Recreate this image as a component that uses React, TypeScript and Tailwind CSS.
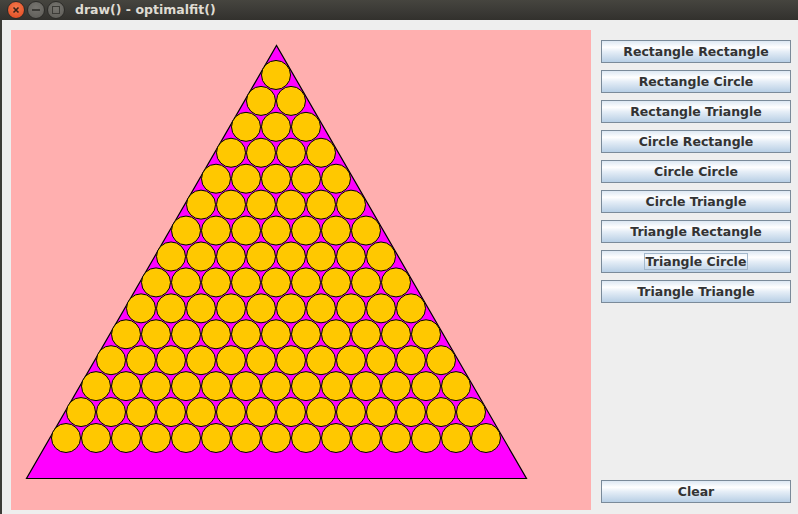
import type { ReactNode } from "react";

const buttons = [
  "Rectangle Rectangle",
  "Rectangle Circle",
  "Rectangle Triangle",
  "Circle Rectangle",
  "Circle Circle",
  "Circle Triangle",
  "Triangle Rectangle",
  "Triangle Circle",
  "Triangle Triangle",
];

function MetalButton({ children, focused = false }: { children: ReactNode; focused?: boolean }) {
  return (
    <button
      className="flex h-[23px] w-[190px] items-center justify-center border border-[#7a8a99] bg-[linear-gradient(to_bottom,#dde8f3_0%,#ffffff_30%,#e6eef7_50%,#b8cfe5_100%)] text-[12.5px] font-bold text-[#333333]"
      style={{ fontFamily: '"DejaVu Sans", sans-serif' }}
    >
      <span className={focused ? "border border-[#a3b8cc] px-[1px] leading-[15px]" : "leading-[15px]"}>{children}</span>
    </button>
  );
}

function Packing() {
  const d = 30;
  const rows = [];
  for (let k = 0; k < 15; k++) {
    const n = 15 - k;
    const cy = 438 - k * 25.93;
    for (let i = 0; i < n; i++) {
      const cx = 276 - (n - 1) * 15 + i * d;
      rows.push(
        <circle key={`${k}-${i}`} cx={cx - 11} cy={cy - 30} r={14.5} fill="#ffc800" stroke="#000" strokeWidth={1} />
      );
    }
  }
  return (
    <svg width={580} height={480} className="block">
      <polygon points="15.5,448.5 515.5,448.5 265.5,15.5" fill="#ff00ff" stroke="#000" strokeWidth={1.2} />
      {rows}
    </svg>
  );
}

export default function App() {
  return (
    <div className="flex h-[514px] w-[798px] flex-col bg-[#eeeeee]" style={{ fontFamily: '"DejaVu Sans", sans-serif' }}>
      <div className="flex h-[20px] items-center bg-[linear-gradient(to_bottom,#46453f,#3a3935_60%,#32312d)]">
        <div className="ml-[7px] flex items-center gap-[2px]">
          <div className="flex h-[18px] w-[18px] items-center justify-center rounded-full border border-[#2c2b28] bg-[radial-gradient(circle_at_50%_35%,#f47a4d,#e0461e)]">
            <svg width="8" height="8" viewBox="0 0 8 8">
              <path d="M1.5 1.5 L6.5 6.5 M6.5 1.5 L1.5 6.5" stroke="#3a2218" strokeWidth="1.6" />
            </svg>
          </div>
          <div className="flex h-[18px] w-[18px] items-center justify-center rounded-full border border-[#2c2b28] bg-[radial-gradient(circle_at_50%_35%,#777570,#5b5a55)]">
            <div className="h-[2px] w-[8px] bg-[#3c3b37]" />
          </div>
          <div className="flex h-[18px] w-[18px] items-center justify-center rounded-full border border-[#2c2b28] bg-[radial-gradient(circle_at_50%_35%,#777570,#5b5a55)]">
            <div className="h-[8px] w-[8px] border-[1.5px] border-[#3c3b37]" />
          </div>
        </div>
        <span className="ml-[10px] text-[12.5px] font-bold text-[#dfdbd2]">draw() - optimalfit()</span>
      </div>
      <div className="flex flex-1 border-l-2 border-[#3c3b37]">
        <div className="ml-[9px] mt-[10px] h-[480px] w-[580px] bg-[#ffafaf]">
          <Packing />
        </div>
        <div className="ml-[10px] mt-[20px] mb-[11px] flex flex-col justify-between">
          <div className="flex flex-col gap-[7px]">
            {buttons.map((b) => (
              <MetalButton key={b} focused={b === "Triangle Circle"}>
                {b}
              </MetalButton>
            ))}
          </div>
          <MetalButton>Clear</MetalButton>
        </div>
      </div>
    </div>
  );
}
